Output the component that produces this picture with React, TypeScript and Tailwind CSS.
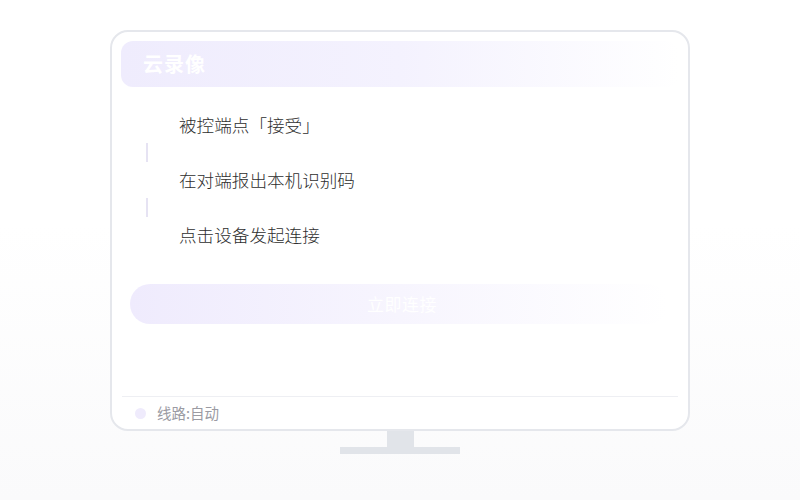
import React from "react";

const steps = ["被控端点「接受」", "在对端报出本机识别码", "点击设备发起连接"];

export default function App() {
  return (
    <div
      className="w-[800px] h-[500px] bg-gradient-to-b from-white from-45% to-[#fafafb] flex flex-col items-center pt-[30px]"
      style={{ fontFamily: '"Noto Sans CJK SC", "Noto Sans", sans-serif' }}
    >
      {/* Monitor */}
      <div className="w-[580px] h-[401px] bg-white border-2 border-[#e5e7ec] rounded-[18px] flex flex-col">
        <div className="p-[9px] pb-0">
          <div className="h-[46px] rounded-[12px] bg-gradient-to-r from-[#efecfd] via-[#f4f2fe] to-white/0 flex items-center pl-[22px]">
            <span className="text-white text-[20px] font-bold tracking-[1px]">云录像</span>
          </div>
        </div>

        {/* Steps */}
        <div className="flex flex-col mt-[26px] pl-[34px]">
          {steps.map((s, i) => (
            <div key={s} className="flex flex-col">
              <div className="h-[24px] flex items-center pl-[33px] text-[17.6px] text-[#2e2e2e] font-light leading-none">
                {s}
              </div>
              {i < steps.length - 1 && (
                <div className="w-[2px] h-[19px] bg-[#e6e3f3] my-[6px]" />
              )}
            </div>
          ))}
        </div>

        {/* Connect button */}
        <div className="mt-[37px] pl-[18px] pr-[20px]">
          <div className="h-[40px] rounded-full bg-gradient-to-r from-[#efebfd] via-[#f7f5fe] to-white/0 flex items-center justify-center">
            <span className="text-white text-[17px] tracking-[0.5px] pl-[6px]">立即连接</span>
          </div>
        </div>

        <div className="flex-1" />

        {/* Footer */}
        <div className="mx-[10px] border-t border-[#eeeff3] h-[33px] flex items-center pl-[13px]">
          <span className="w-[11px] h-[11px] rounded-full bg-[#efebfc]" />
          <span className="ml-[11px] text-[14.5px] text-[#9b9ba3]">线路:自动</span>
        </div>
      </div>

      {/* Stand */}
      <div className="w-[27px] h-[16px] bg-[#e1e4e9]" />
      <div className="w-[120px] h-[7px] bg-[#e1e4e9]" />
    </div>
  );
}
